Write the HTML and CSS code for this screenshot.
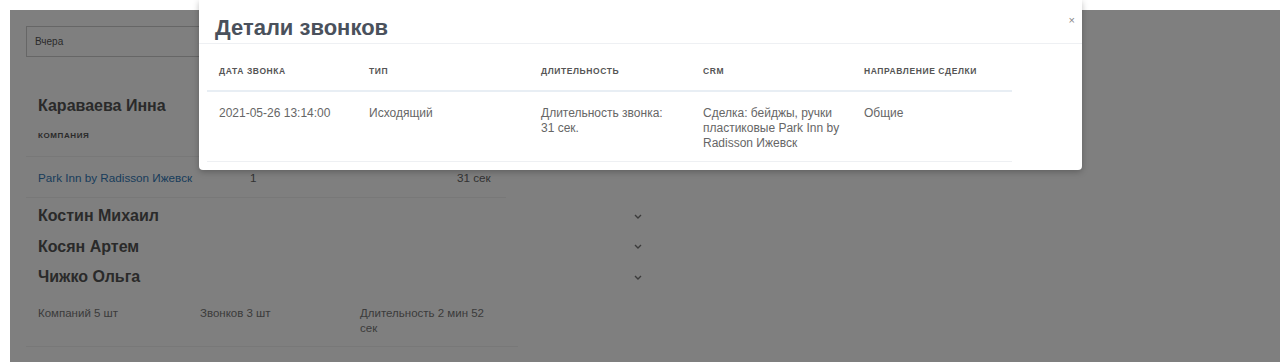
FILE: index.html
```html
<!DOCTYPE html>
<html lang="ru">
<head>
  <meta charset="UTF-8" />
  <title>Звонки</title>
  <link rel="stylesheet" href="styles.css">
</head>
<body>

  <div class="app">
    <div class="filter">
      <input type="text" class="period" value="Вчера" />
    </div>

    <div class="manager">
      <div class="manager-name">Караваева Инна</div>
      <div class="company-head">Компания</div>
      <div class="company-row">
        <a href="#">Park Inn by Radisson Ижевск</a>
        <span>1</span>
        <span>31 сек</span>
      </div>
    </div>

    <div class="manager-closed">
      <span class="manager-name">Костин Михаил</span>
      <svg class="chev" width="8" height="5" viewBox="0 0 8 5"><path d="M1 1l3 3 3-3" fill="none" stroke="#777" stroke-width="1.4"/></svg>
    </div>
    <div class="manager-closed">
      <span class="manager-name">Косян Артем</span>
      <svg class="chev" width="8" height="5" viewBox="0 0 8 5"><path d="M1 1l3 3 3-3" fill="none" stroke="#777" stroke-width="1.4"/></svg>
    </div>
    <div class="manager-closed">
      <span class="manager-name">Чижко Ольга</span>
      <svg class="chev" width="8" height="5" viewBox="0 0 8 5"><path d="M1 1l3 3 3-3" fill="none" stroke="#777" stroke-width="1.4"/></svg>
    </div>

    <div class="totals">
      <span>Компаний 5 шт</span>
      <span>Звонков 3 шт</span>
      <span>Длительность 2 мин 52 сек</span>
    </div>

    <div class="backdrop"></div>

    <div class="modal">
      <div class="modal-header">
        <h2>Детали звонков</h2>
        <button class="close">×</button>
      </div>
      <div class="modal-body">
        <table class="calls">
          <thead>
            <tr>
              <th class="c1">Дата звонка</th>
              <th class="c2">Тип</th>
              <th class="c3">Длительность</th>
              <th class="c4">CRM</th>
              <th class="c5">Направление сделки</th>
            </tr>
          </thead>
          <tbody>
            <tr>
              <td>2021-05-26 13:14:00</td>
              <td>Исходящий</td>
              <td>Длительность звонка: 31 сек.</td>
              <td>Сделка: бейджы, ручки пластиковые Park Inn by Radisson Ижевск</td>
              <td>Общие</td>
            </tr>
          </tbody>
        </table>
      </div>
    </div>
  </div>

</body>
</html>
```

FILE: styles.css
```css
body {
  margin: 0;
  background: #fff;
  font-family: "Liberation Sans", Arial, sans-serif;
}

.app {
  position: relative;
  margin: 10px 0 0 10px;
  height: 352px;
  padding: 16px;
  box-sizing: border-box;
  background: #fff;
  color: #555;
}

.period {
  width: 340px;
  height: 31px;
  box-sizing: border-box;
  border: 1px solid #ccc;
  padding: 0 8px;
  font-family: inherit;
  font-size: 10px;
  color: #555;
}

.manager {
  width: 480px;
  margin-top: 39px;
}

.manager-name {
  font-size: 16px;
  font-weight: bold;
  line-height: 20px;
  color: #555;
}

.manager > .manager-name {
  padding-left: 12px;
}

.company-head {
  padding: 14px 12px 14px;
  font-size: 8px;
  font-weight: bold;
  letter-spacing: 0.6px;
  text-transform: uppercase;
  line-height: 12px;
  border-bottom: 1px solid #f0f0f0;
}

.company-row {
  display: grid;
  grid-template-columns: 212px 207px 60px;
  padding: 14px 0 12px 12px;
  font-size: 11.7px;
  line-height: 14px;
  border-bottom: 1px solid #f0f0f0;
  color: #666;
}

.company-row a {
  color: #337ab7;
  text-decoration: none;
}

.manager-closed {
  display: flex;
  align-items: center;
  justify-content: space-between;
  width: 604px;
  height: 30.5px;
  padding-left: 12px;
}

.manager + .manager-closed {
  margin-top: 3px;
}

.chev {
  display: block;
}

.totals {
  display: grid;
  grid-template-columns: 162px 160px 140px;
  width: 480px;
  margin-top: 13px;
  padding: 0 0 10px 12px;
  font-size: 11.5px;
  line-height: 15px;
  color: #777;
  border-bottom: 1px solid #f0f0f0;
}

.backdrop {
  position: absolute;
  inset: 0;
  background: rgba(0, 0, 0, 0.5);
}

.modal {
  position: absolute;
  top: -10px;
  left: 189px;
  width: 883px;
  background: #fff;
  border-radius: 0 0 4px 4px;
  box-shadow: 0 2px 6px rgba(0, 0, 0, 0.25);
}

.modal-header {
  position: relative;
  padding: 15px 16px 2px;
  border-bottom: 1px solid #eef0f3;
}

.modal-header h2 {
  margin: 0;
  font-size: 22px;
  line-height: 26px;
  font-weight: bold;
  color: #4a515c;
}

.close {
  position: absolute;
  top: 14px;
  right: 7px;
  border: none;
  background: none;
  padding: 0;
  font-size: 11px;
  color: #888;
  font-family: inherit;
}

.modal-body {
  padding: 8px;
}

.calls {
  width: 805px;
  border-collapse: collapse;
  table-layout: fixed;
  font-size: 12px;
  color: #666;
}

.calls th {
  padding: 14px 12px 14px;
  text-align: left;
  font-size: 8.5px;
  line-height: 10px;
  font-weight: bold;
  letter-spacing: 0.6px;
  text-transform: uppercase;
  color: #555;
  border-bottom: 2px solid #e8eef4;
}

.calls td {
  padding: 14px 12px 10px;
  line-height: 15px;
  vertical-align: top;
  border-bottom: 1px solid #eef0f3;
}

.c1 { width: 126px; }
.c2 { width: 148px; }
.c3 { width: 138px; }
.c4 { width: 137px; }
.c5 { width: 136px; }
```
